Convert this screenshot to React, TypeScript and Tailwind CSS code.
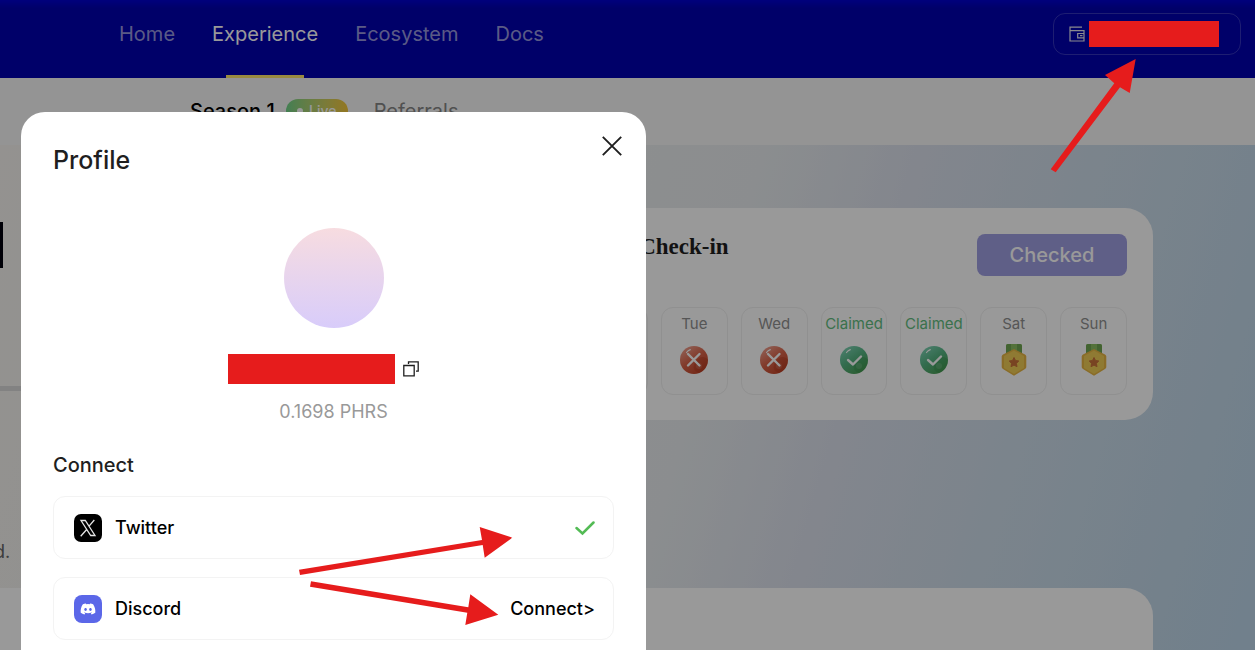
import { useState } from 'react';
import { FaDiscord } from 'react-icons/fa6';

type DayStatus = 'missed' | 'claimed' | 'upcoming';

const navItems = ['Home', 'Experience', 'Ecosystem', 'Docs'];

const days: { name: string; status: DayStatus }[] = [
  { name: 'Mon', status: 'missed' },
  { name: 'Tue', status: 'missed' },
  { name: 'Wed', status: 'missed' },
  { name: 'Thu', status: 'claimed' },
  { name: 'Fri', status: 'claimed' },
  { name: 'Sat', status: 'upcoming' },
  { name: 'Sun', status: 'upcoming' },
];

function WalletIcon() {
  return (
    <svg className="w-4 h-4 shrink-0" viewBox="0 0 16 16" fill="none" stroke="#e6e6ee" strokeWidth="1.2">
      <path d="M13 1.200H1v13.800h14V4.700H1" />
      <path d="M15 7.500H8.700v4.300H15M11 9.600h2.500" />
    </svg>
  );
}

function CopyIcon() {
  return (
    <svg className="w-4 h-4" viewBox="0 0 16 16" fill="none" stroke="#1f1f1f" strokeWidth="1.300">
      <path d="M.8 4.500h10.400v10.400H.8z" />
      <path d="M5.500 3V.8h9.700v9.400H13" />
    </svg>
  );
}

function BallIcon({ ok }: { ok: boolean }) {
  const id = ok ? 'ball-ok' : 'ball-no';
  return (
    <svg className="w-7 h-7" viewBox="0 0 28 28" fill="none">
      <defs>
        <linearGradient id={id} x1="5" y1="2" x2="22" y2="27" gradientUnits="userSpaceOnUse">
          <stop stopColor={ok ? '#7ad0b0' : '#ee9a88'} />
          <stop offset=".45" stopColor={ok ? '#55b482' : '#d9644a'} />
          <stop offset="1" stopColor={ok ? '#4a9c52' : '#c04428'} />
        </linearGradient>
      </defs>
      <circle cx="14" cy="14" r="14" fill={`url(#${id})`} />
      <path d="M28 14a14 14 0 0 1-9 13c-6-2-7-7-3-12 3-4 8-6 12-1z" fill={ok ? '#2f8a45' : '#a92f14'} opacity=".3" />
      <circle cx="19" cy="20" r="3" fill="#fff" opacity=".12" />
      <path d="M6.500 6.500Q8 4.500 10.300 3.600" stroke="#fff" strokeWidth="1.200" strokeLinecap="round" />
      <path
        d={ok ? 'M8 14l5 4.500 8-8' : 'M8 8l11.500 11.500M19.500 8L8 19.500'}
        stroke="#fff"
        strokeWidth="2.400"
        strokeLinecap="round"
        strokeLinejoin="round"
      />
    </svg>
  );
}

function MedalIcon() {
  return (
    <svg className="w-7 h-8" viewBox="0 0 28 32">
      <path d="M6 2q0-2 2-2h12q2 0 2 2v8H6z" fill="#8abf62" />
      <path d="M6 2q0-2 2-2h3v9H6zM22 2q0-2-2-2h-3v9h5z" fill="#6fa650" />
      <path d="M14 5l11 5.500q1.300.8 1.300 2V23q0 1.200-1.300 2L14 31.700 3 25q-1.300-.8-1.300-2V12.500q0-1.200 1.300-2z" fill="#e6b443" />
      <path d="M14 6.500l10 5.500v12l-10 6L4 24V12z" fill="#efcb55" />
      <path
        d="M14 13.500l1.500 3 3.300.5-2.400 2.400.6 3.300-3-1.600-3 1.600.6-3.300-2.400-2.400 3.300-.5z"
        fill="#c9713a"
        stroke="#c9713a"
        strokeLinejoin="round"
      />
    </svg>
  );
}

function XLogo() {
  return (
    <svg className="w-7 h-7" viewBox="0 0 28 28">
      <rect width="28" height="28" rx="7" fill="#000" />
      <path
        d="M7 6.500h4.300L21 21.500h-4.300zM20.300 6l-5.700 6.700M12.900 15.200L6.700 22.300"
        fill="none"
        stroke="#e5e5e5"
        strokeWidth="1.300"
      />
    </svg>
  );
}

function DayCard({ name, status }: { name: string; status: DayStatus }) {
  const claimed = status === 'claimed';
  return (
    <li className="flex-1 h-[88px] pt-1.5 rounded-xl border border-[#f0f0f0] flex flex-col items-center">
      <span className={claimed ? 'text-[15px] leading-5 text-[#62bd80]' : 'text-[15px] leading-5 text-[#8f8f8f]'}>
        {claimed ? 'Claimed' : name}
      </span>
      <span className="h-[52px] flex items-center justify-center">
        {status === 'upcoming' ? <MedalIcon /> : <BallIcon ok={claimed} />}
      </span>
    </li>
  );
}

function ProfileModal({ onClose }: { onClose: () => void }) {
  return (
    <div className="fixed inset-0 z-40 bg-black/40 overflow-hidden pt-28 px-[21px]">
      <div role="dialog" aria-label="Profile" className="w-full max-w-[625px] min-h-screen bg-white rounded-3xl px-8 pt-8">
        <div className="flex items-start justify-between">
          <h2 className="text-[25px] leading-8 font-medium text-[#1f1f1f]">Profile</h2>
          <button onClick={onClose} aria-label="Close" className="w-7 h-7 -mr-3 -mt-3 flex items-center justify-center">
            <svg className="w-5 h-5" viewBox="0 0 20 20" stroke="#1f1f1f" strokeWidth="1.900">
              <path d="M.8.8l18.400 18.400M19.200.8L.8 19.200" />
            </svg>
          </button>
        </div>

        <div className="mt-[52px] flex flex-col items-center">
          <div className="w-[100px] h-[100px] rounded-full bg-gradient-to-b from-[#f7dce0] to-[#d8ccfa]" />
          <div className="mt-[26px] mr-5 flex items-center gap-2">
            <span className="w-[167px] h-[30px] bg-[#e61c1c]" />
            <button aria-label="Copy address"><CopyIcon /></button>
          </div>
          <p className="mt-3.5 text-lg leading-7 text-[#999]">0.1698 PHRS</p>
        </div>

        <h3 className="mt-[25px] text-xl leading-7 font-medium text-[#1f1f1f]">Connect</h3>
        <ul className="mt-[17px] flex flex-col gap-[18px] text-lg font-medium text-black">
          <li className="h-[63px] px-5 rounded-xl border border-[#f3f3f3] flex items-center">
            <XLogo />
            <span className="ml-[13px] flex-1">Twitter</span>
            <svg className="w-5 h-4 -mr-0.5" viewBox="0 0 20 16" fill="none" stroke="#53bb55" strokeWidth="2.500">
              <path d="M1.500 8l6 5.500L18.500 2.500" strokeLinecap="round" />
            </svg>
          </li>
          <li className="h-[63px] px-5 pr-[18px] rounded-xl border border-[#f3f3f3] flex items-center">
            <span className="w-7 h-7 rounded-lg bg-[#5b67e8] flex items-center justify-center">
              <FaDiscord className="w-4 h-4 text-white" />
            </span>
            <span className="ml-[13px] flex-1">Discord</span>
            <button>Connect&gt;</button>
          </li>
        </ul>
      </div>
    </div>
  );
}

// red pointers drawn over the whole page
function Arrows() {
  return (
    <svg className="fixed inset-0 z-50 w-full h-full pointer-events-none" fill="#e61c1c">
      <path d="M1050.700 169.300L1114.300 83.300 1105 75l30.700-16-6 34-9.700-5.700-64.300 85z" />
      <path d="M299 569.700L482 540l-2.300-13 32.600 10.700-27.600 20-2-12.700L300 575z" />
      <path d="M311 581.300l157.300 26 2-13 28 20.400-33 10.300 2-12.300-157.300-26z" />
    </svg>
  );
}

export default function App() {
  const [open, setOpen] = useState(true);

  return (
    <div className="h-screen overflow-hidden flex flex-col bg-white font-['Inter','Liberation_Sans',sans-serif]">
      <header className="h-[78px] shrink-0 pl-[119px] pr-3.5 flex items-start justify-between bg-[linear-gradient(#0000d0,#0000b0_8px)]">
        <nav className="h-full flex gap-[37px] text-xl text-white/60">
          {navItems.map((item) => (
            <a key={item} href="#" className={item === 'Experience' ? 'flex flex-col justify-between items-center text-white' : ''}>
              <span className="block pt-5">{item}</span>
              {item === 'Experience' && <span className="w-[78px] h-[3px] bg-[#fde66b]" />}
            </a>
          ))}
        </nav>
        <button onClick={() => setOpen(true)} aria-label="Wallet"
          className="mt-[13px] w-[188px] h-[42px] pl-[15px] rounded-xl border border-white/20 flex items-center gap-1">
          <WalletIcon />
          <span className="relative z-50 w-[130px] h-[26px] bg-[#e61c1c]" />
        </button>
      </header>

      <div className="h-[67px] shrink-0 pl-[190px] pb-0.5 flex items-center text-xl bg-[#f7f7f7]">
        <a href="#" className="font-medium text-black">Season 1</a>
        <span className="ml-[11px] w-[62px] h-6 rounded-full bg-gradient-to-r from-[#6fd48a] to-[#f5c636] text-sm font-medium text-white flex items-center justify-center gap-1.5">
          <span className="w-1.5 h-1.5 rounded-full bg-white" />
          Live
        </span>
        <a href="#" className="ml-[26px] text-[#858585]">Referrals</a>
      </div>

      <main className="grow bg-[linear-gradient(106deg,#f7f4f0,#e8ecee_52%,#dadfec_63%,#cfdde9_73%,#c1d7e8_88%,#b8d4ea)]">
        <div className="pt-[63px] pr-[102px] flex items-start justify-between">
          <div className="w-[520px] pt-3.5">
            <div className="w-[3px] h-[46px] bg-[#00000d]" />
            <hr className="mt-[118px] border-0 h-[5px] bg-[#d9d9d9]" />
            <p className="mt-[149px] mb-6 -ml-1.5 text-lg leading-6 text-[#666]">d.</p>
          </div>
          <section className="w-[598px] p-[26px] pb-[25px] rounded-[28px] bg-white">
            <div className="flex items-start justify-between">
              <h2 className="text-[23px] leading-[26px] font-bold text-[#1f1f1f] font-['Liberation_Serif',serif]">Daily Check-in</h2>
              <button className="w-[150px] h-[42px] rounded-lg bg-[#9f9ee2] text-xl font-medium text-white">Checked</button>
            </div>
            <ul className="mt-[31px] flex gap-[13px]">
              {days.map((day) => (
                <DayCard key={day.name} {...day} />
              ))}
            </ul>
          </section>
        </div>
        <section className="mr-[102px] h-80 rounded-tr-[28px] bg-white" />
      </main>

      {open && <ProfileModal onClose={() => setOpen(false)} />}
      <Arrows />
    </div>
  );
}
